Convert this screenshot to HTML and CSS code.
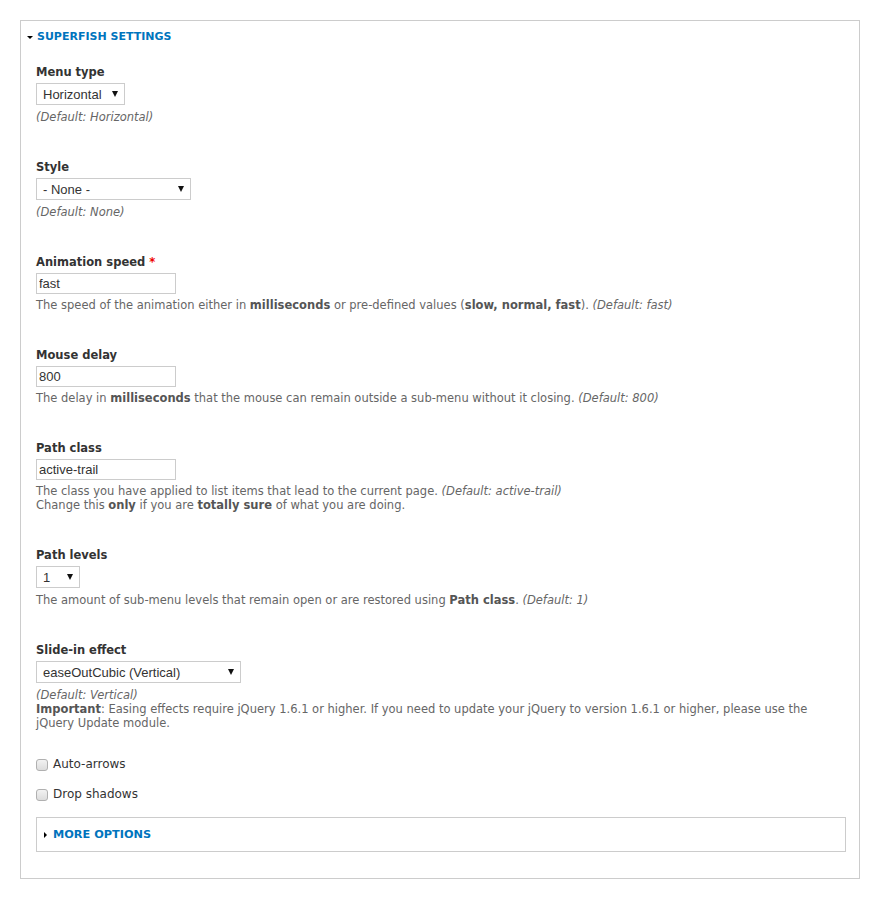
FILE: index.html
```html
<!DOCTYPE html>
<html>
<head>
<meta charset="utf-8">
<link rel="stylesheet" href="styles.css">
</head>
<body>
<div class="fieldset">
  <div class="legend"><span class="tri-down"></span><span class="legend-text">SUPERFISH SETTINGS</span></div>

  <div class="form-item first">
    <label class="label">Menu type</label>
    <div class="select-wrap"><select class="select w-menu"><option>Horizontal</option></select></div>
    <div class="desc desc-sel"><em>(Default: Horizontal)</em></div>
  </div>

  <div class="form-item">
    <label class="label">Style</label>
    <div class="select-wrap"><select class="select w-style"><option>- None -</option></select></div>
    <div class="desc desc-sel"><em>(Default: None)</em></div>
  </div>

  <div class="form-item">
    <label class="label">Animation speed <span class="req">*</span></label>
    <input class="text" type="text" value="fast">
    <div class="desc">The speed of the animation either in <strong>milliseconds</strong> or pre-defined values (<strong>slow, normal, fast</strong>). <em>(Default: fast)</em></div>
  </div>

  <div class="form-item">
    <label class="label">Mouse delay</label>
    <input class="text" type="text" value="800">
    <div class="desc">The delay in <strong>milliseconds</strong> that the mouse can remain outside a sub-menu without it closing. <em>(Default: 800)</em></div>
  </div>

  <div class="form-item">
    <label class="label">Path class</label>
    <input class="text" type="text" value="active-trail">
    <div class="desc">The class you have applied to list items that lead to the current page. <em>(Default: active-trail)</em><br>Change this <strong>only</strong> if you are <strong>totally sure</strong> of what you are doing.</div>
  </div>

  <div class="form-item">
    <label class="label">Path levels</label>
    <div class="select-wrap"><select class="select w-levels"><option>1</option></select></div>
    <div class="desc desc-sel">The amount of sub-menu levels that remain open or are restored using <strong>Path class</strong>. <em>(Default: 1)</em></div>
  </div>

  <div class="form-item">
    <label class="label">Slide-in effect</label>
    <div class="select-wrap"><select class="select w-slide"><option>easeOutCubic (Vertical)</option></select></div>
    <div class="desc desc-sel"><em>(Default: Vertical)</em></div>
    <div class="desc desc-flat"><strong>Important</strong>: Easing effects require jQuery 1.6.1 or higher. If you need to update your jQuery to version 1.6.1 or higher, please use the jQuery Update module.</div>
  </div>

  <div class="check-item first-check">
    <input type="checkbox" class="checkbox" id="c1"><label for="c1">Auto-arrows</label>
  </div>
  <div class="check-item">
    <input type="checkbox" class="checkbox" id="c2"><label for="c2">Drop shadows</label>
  </div>

  <div class="inner-fieldset">
    <div class="inner-legend"><span class="tri-right"></span><span class="legend-text">MORE OPTIONS</span></div>
  </div>
</div>
</body>
</html>
```

FILE: styles.css
```css
html, body {
  background: #fff;
}
body {
  margin: 20px;
  font-family: "DejaVu Sans", "Noto Sans", sans-serif;
  color: #333;
}
.fieldset {
  border: 1px solid #ccc;
  padding: 8px 13px 26px 15px;
}
.legend {
  display: flex;
  align-items: center;
  height: 16px;
  margin-left: -10px;
}
.legend-text {
  font-size: 11px;
  font-weight: bold;
  color: #0074bd;
  line-height: 16px;
}
.tri-down {
  width: 0;
  height: 0;
  border-left: 3px solid transparent;
  border-right: 3px solid transparent;
  border-top: 3px solid #000;
  margin-right: 4px;
  margin-left: 1px;
}
.tri-right {
  width: 0;
  height: 0;
  border-top: 3px solid transparent;
  border-bottom: 3px solid transparent;
  border-left: 3px solid #000;
  margin-right: 6px;
}
.form-item {
  margin-top: 34px;
}
.form-item.first {
  margin-top: 18px;
}
.label {
  display: block;
  font-size: 11.5px;
  font-weight: bold;
  line-height: 18px;
  color: #333;
}
.req {
  color: #e00;
}
.select-wrap {
  position: relative;
  width: fit-content;
  margin-top: 2px;
}
.select-wrap::after {
  content: "";
  position: absolute;
  right: 7px;
  top: 8px;
  border-left: 3px solid transparent;
  border-right: 3px solid transparent;
  border-top: 6px solid #111;
  pointer-events: none;
}
.select {
  display: block;
  appearance: none;
  -webkit-appearance: none;
  box-sizing: border-box;
  height: 22px;
  border: 1px solid #ccc;
  border-radius: 0;
  background: #fff;
  padding: 0 0 0 6px;
  margin: 0;
  font-family: "Liberation Sans", Arial, sans-serif;
  font-size: 13px;
  color: #333;
}
.w-menu { width: 89px; }
.w-style { width: 155px; }
.w-levels { width: 44px; }
.w-slide { width: 205px; }
.text {
  display: block;
  box-sizing: border-box;
  width: 140px;
  height: 21px;
  margin: 2px 0 0 0;
  border: 1px solid #ccc;
  border-radius: 0;
  padding: 0 2px;
  font-family: "Liberation Sans", Arial, sans-serif;
  font-size: 13px;
  color: #333;
  background: #fff;
}
.desc {
  font-size: 11.5px;
  line-height: 14px;
  color: #666;
  margin-top: 4px;
}
.desc.desc-sel {
  margin-top: 5px;
}
.desc.desc-flat {
  margin-top: 0;
}
.desc strong {
  color: #555;
}
.check-item {
  display: flex;
  align-items: center;
  height: 16px;
  margin-top: 14px;
}
.check-item.first-check {
  margin-top: 26px;
}
.check-item label {
  font-size: 12px;
  line-height: 16px;
  color: #333;
}
.checkbox {
  appearance: none;
  -webkit-appearance: none;
  box-sizing: border-box;
  width: 12px;
  height: 12px;
  margin: 2px 5px 0 0;
  border: 1px solid #b0b0b0;
  border-radius: 3px;
  background: linear-gradient(#f2f2f2, #dcdcdc);
}
.inner-fieldset {
  margin-top: 15px;
  border: 1px solid #ccc;
  padding: 9px 10px 8px 7px;
}
.inner-legend {
  display: flex;
  align-items: center;
  height: 16px;
}
.inner-legend .legend-text {
  font-size: 11.3px;
}
```
